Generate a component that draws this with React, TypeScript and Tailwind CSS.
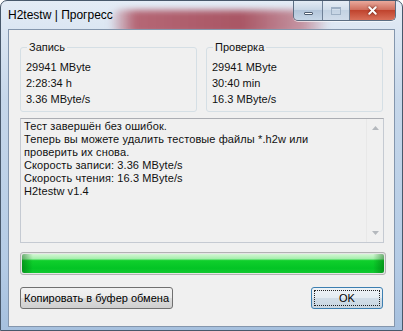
import { X } from "lucide-react";

const ui = "font-['Liberation_Sans',Tahoma,Arial,sans-serif]";

function GroupBox({ title, lines }: { title: string; lines: string[] }) {
  return (
    <fieldset className="h-[72px] w-[177px] rounded-[3px] border border-[#d5dfe5] pl-[5px] pt-[5px]">
      <legend className="ml-px px-[2px] text-[11px] leading-[14px]">{title}</legend>
      {lines.map((l) => (
        <div key={l} className="text-[11px] leading-[16px]">
          {l}
        </div>
      ))}
    </fieldset>
  );
}

function CaptionButtons() {
  return (
    <div className="mr-[6px] flex h-[20px] self-start overflow-hidden rounded-b-[5px] border border-t-0 border-[#5b6d82] shadow-[0_1px_0_rgba(255,255,255,0.6)]">
      <div className="flex w-[29px] items-center justify-center border-r border-[#6e8096] bg-[linear-gradient(to_bottom,#e3ebf4,#c9d7e6_45%,#b3c5da_50%,#c7d7e8)]">
        <div className="mt-[5px] h-[3px] w-[9px] rounded-[1px] border border-[#4e5d70] bg-white" />
      </div>
      <div className="flex w-[27px] items-center justify-center border-r border-[#6e8096] bg-[linear-gradient(to_bottom,#e6edf5,#d3dfeb_45%,#c4d3e3_50%,#d0dcea)]">
        <div className="h-[8px] w-[10px] border border-[#9eb0c4] border-t-2 bg-transparent" />
      </div>
      <div className="flex w-[45px] items-center justify-center bg-[linear-gradient(to_bottom,#e9a99c,#d0705f_45%,#c0442e_50%,#d8705a)]">
        <X className="size-[13px] text-white drop-shadow-[0_0_1px_#5a1a10]" strokeWidth={3.5} />
      </div>
    </div>
  );
}

function Arrow({ up }: { up?: boolean }) {
  return (
    <svg width="7" height="4" viewBox="0 0 7 4">
      <path d={up ? "M0 4 L3.5 0 L7 4 Z" : "M0 0 L3.5 4 L7 0 Z"} fill="#b4b8bd" />
    </svg>
  );
}

export default function App() {
  return (
    <div className={`h-[331px] w-[403px] overflow-hidden bg-white text-[#111] ${ui}`}>
      <div className="relative flex h-[331px] w-[403px] flex-col rounded-t-[7px] border border-[#48586b] bg-[linear-gradient(to_bottom,#e4ecf6,#c6d7ea_30%,#b4cbe5_80%,#a6c0de)]">
        {/* blurred desktop colour showing through the glass */}
        <div className="pointer-events-none absolute left-[108px] top-[9px] h-[24px] w-[220px] rounded-[12px] bg-[linear-gradient(to_right,transparent,rgba(170,70,85,0.8)_12%,rgba(160,60,75,0.85)_60%,rgba(180,95,110,0.6)_88%,transparent)] blur-[3px]" />
        <div className="relative flex h-[28px] items-start justify-between">
          <span className="ml-[7px] mt-[6px] text-[12px] leading-[16px] text-black">H2testw | Прогресс</span>
          <CaptionButtons />
        </div>
        <div className="relative mx-[7px] flex h-[298px] flex-col border border-[#8496ad] bg-[#f0f0f0] px-[11px]">
          <div className="mt-[10px] flex gap-[9px]">
            <GroupBox title="Запись" lines={["29941 MByte", "2:28:34 h", "3.36 MByte/s"]} />
            <GroupBox title="Проверка" lines={["29941 MByte", "30:40 min", "16.3 MByte/s"]} />
          </div>
          <div className="mt-[6px] flex h-[125px] w-[364px] border border-[#c5cad2] border-t-[#abadb3] bg-[#f0f0f0]">
            <div className="flex-1 pl-[3px] pt-[1px] text-[11px] leading-[13px] tracking-[0.1px]">
              <div>Тест завершён без ошибок.</div>
              <div>Теперь вы можете удалить тестовые файлы *.h2w или</div>
              <div>проверить их снова.</div>
              <div>Скорость записи: 3.36 MByte/s</div>
              <div>Скорость чтения: 16.3 MByte/s</div>
              <div>H2testw v1.4</div>
            </div>
            <div className="flex w-[17px] flex-col items-center justify-between border-l border-[#e8e8e8] py-[7px]">
              <Arrow up />
              <Arrow />
            </div>
          </div>
          <div className="mt-[9px] h-[23px] w-[366px] rounded-[3px] border border-[#b2b2b2] bg-[#e6e6e6] p-px">
            <div className="h-full w-full rounded-[2px] bg-[linear-gradient(to_right,rgba(0,90,10,0.45),transparent_3%,transparent_97%,rgba(0,90,10,0.45)),linear-gradient(to_bottom,#d6f7d6_0%,#a6eeac_25%,#10cf2c_35%,#03c425_75%,#12c931_100%)]" />
          </div>
          <div className="mt-[12px] flex items-center justify-between">
            <button className="h-[22px] w-[153px] rounded-[3px] border border-[#707070] bg-[linear-gradient(to_bottom,#f2f2f2,#ebebeb_50%,#dddddd_50%,#cfcfcf)] text-[11px] leading-[14px] text-black">
              Копировать в буфер обмена
            </button>
            <button className="h-[22px] w-[72px] rounded-[3px] border border-[#3c7fb1] bg-[linear-gradient(to_bottom,#eef3f7,#e4ecf2_50%,#d2dee8_50%,#c7d6e2)] p-[2px] text-[11px] leading-[14px] text-black">
              <div className="flex h-full w-full items-center justify-center border border-dotted border-[#222]">OK</div>
            </button>
          </div>
        </div>
      </div>
    </div>
  );
}
